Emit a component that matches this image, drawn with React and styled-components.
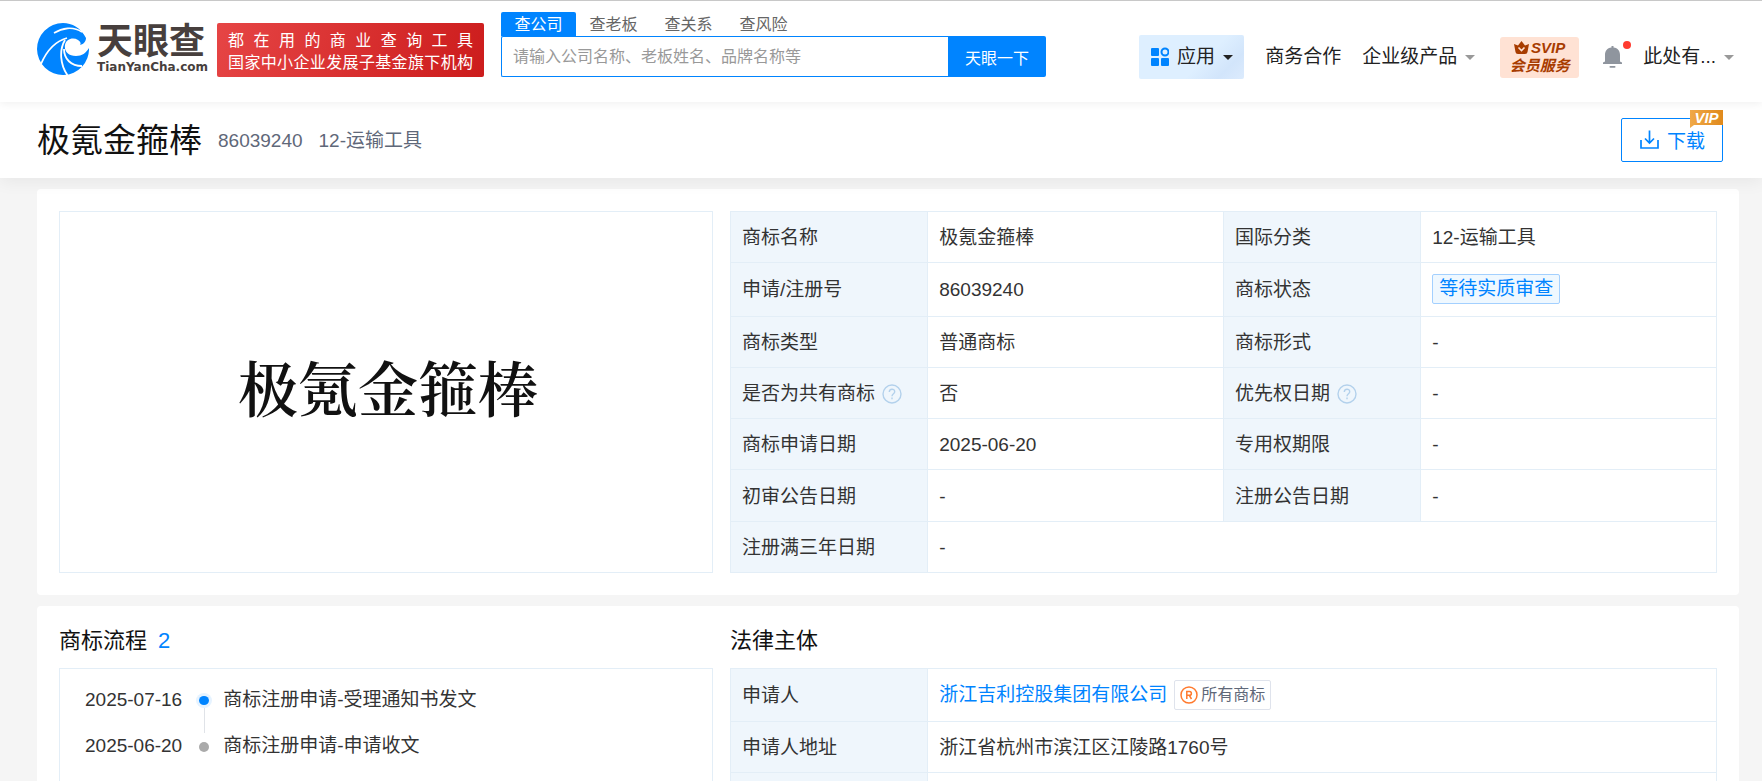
import React, { useState } from "react";
import styled, { createGlobalStyle } from "styled-components";

const GlobalStyle = createGlobalStyle`
  * {
    box-sizing: border-box;
  }

  html {
    scrollbar-width: none;
  }

  body {
    margin: 0;
    background-color: #f5f5f5;
    color: #333333;
    font-family: "Liberation Sans", "Noto Sans CJK SC", sans-serif;
    font-size: 19px;
    line-height: 26px;
  }

  button,
  input {
    font-family: inherit;
  }

  a {
    color: inherit;
    text-decoration: none;
  }
`;

const Header = styled.header`
  position: relative;
  z-index: 2;
  display: flex;
  align-items: flex-start;
  height: 102px;
  padding: 0 28px 0 37px;
  border-top: 1px solid #c8c8c8;
  background-color: #ffffff;
  box-shadow: 0 2px 8px rgba(0, 0, 0, 0.06);
`;
const Logo = styled.a`
  display: flex;
  gap: 8px;
  margin-top: 22px;
  color: #473f3d;
`;
const LogoText = styled.span`
  display: flex;
  flex-direction: column;
`;
const LogoName = styled.span`
  font-size: 36px;
  font-weight: 700;
  line-height: 38px;
`;
const LogoDomain = styled.span`
  font-family: "DejaVu Sans", sans-serif;
  font-size: 12px;
  font-weight: 700;
  line-height: 12px;
`;
const Promo = styled.div`
  width: 267px;
  height: 54px;
  margin: 22px 0 0 9px;
  padding: 7px 11px 0;
  border-radius: 2px;
  background: linear-gradient(110deg, #e64545, #cc1c1c);
  color: #ffffff;
  font-size: 16px;
  line-height: 22px;
`;
const PromoLine = styled.div`
  text-align-last: justify;
  white-space: nowrap;
`;
const Search = styled.form`
  flex: 0 1 545px;
  margin: 11px 0 0 17px;
`;
const SearchTabs = styled.div`
  display: flex;
`;
const SearchTab = styled.button`
  width: 75px;
  height: 24px;
  padding: 1px 0 0;
  border: 0;
  border-radius: 2px 2px 0 0;
  background-color: ${({ $active }) => ($active ? "#0084ff" : "transparent")};
  color: ${({ $active }) => ($active ? "#ffffff" : "#666666")};
  font-size: 16px;
  line-height: 24px;
  cursor: pointer;
`;
const SearchRow = styled.div`
  display: flex;
  height: 41px;
`;
const SearchInput = styled.input`
  flex: 1;
  min-width: 0;
  padding: 0 11px;
  border: 1px solid #0084ff;
  border-right: 0;
  border-radius: 2px 0 0 2px;
  outline: 0;
  font-size: 16px;

  &::placeholder {
    color: #999999;
  }
`;
const SearchButton = styled.button`
  width: 98px;
  padding: 0;
  border: 0;
  border-radius: 0 2px 2px 0;
  background-color: #0084ff;
  color: #ffffff;
  font-size: 16px;
  cursor: pointer;
`;
const Nav = styled.nav`
  display: flex;
  align-items: center;
  height: 44px;
  margin: 34px 0 0 auto;
  white-space: nowrap;
`;
const NavLink = styled.a`
  display: flex;
  align-items: center;
  gap: 8px;
  margin-left: 21px;
  color: #222222;
`;
const AppsLink = styled(NavLink)`
  height: 44px;
  margin-left: 0;
  padding: 0 11px 0 12px;
  border-radius: 2px;
  background: linear-gradient(135deg, #deefff 60%, #d2e5fb 82%, #dcebfd);
`;
const Caret = styled.span`
  border: 5px solid transparent;
  border-top-color: ${({ $dark }) => ($dark ? "#222222" : "#999999")};
  border-bottom: 0;
`;
const VipService = styled.a`
  display: flex;
  flex-direction: column;
  align-items: center;
  width: 79px;
  height: 41px;
  margin-left: 25px;
  padding-top: 2px;
  border-radius: 3px;
  background-color: #ffe2d4;
  color: #a83c00;
  font-size: 15px;
  font-weight: 700;
  font-style: italic;
  line-height: 18px;
`;
const VipServiceTop = styled.span`
  display: flex;
  align-items: center;
  gap: 2px;
`;
const BellButton = styled.button`
  position: relative;
  display: flex;
  margin-left: 24px;
  padding: 0;
  border: 0;
  background: none;
  cursor: pointer;
`;
const BellDot = styled.span`
  position: absolute;
  top: -5px;
  right: -9px;
  width: 8px;
  height: 8px;
  border-radius: 50%;
  background-color: #ff3b30;
`;

const TitleBar = styled.section`
  position: relative;
  z-index: 1;
  display: flex;
  align-items: center;
  height: 76px;
  padding: 0 39px 0 37px;
  background-color: #ffffff;
  box-shadow: 0 4px 16px rgba(0, 0, 0, 0.06);
`;
const TitleGroup = styled.div`
  display: flex;
  align-items: center;
  padding-top: 2px;
  color: #5f6879;
`;
const Title = styled.h1`
  margin: 0;
  color: #111111;
  font-size: 33px;
  font-weight: 400;
  line-height: 44px;
`;
const TitleMeta = styled.span`
  margin-left: 16px;
`;
const DownloadButton = styled.button`
  position: relative;
  display: flex;
  align-items: center;
  gap: 8px;
  height: 44px;
  margin-left: auto;
  padding: 0 17px 2px 18px;
  border: 1px solid #0084ff;
  border-radius: 2px;
  background-color: #ffffff;
  color: #0084ff;
  font-size: 19px;
  cursor: pointer;
`;
const VipBadge = styled.span`
  position: absolute;
  top: -9px;
  right: -1px;
  width: 33px;
  height: 18px;
  background: linear-gradient(90deg, #f0a848, #e08a1c);
  clip-path: polygon(0 0, 100% 0, 100% 15px, 4px 15px, 0 18px);
  color: #ffffff;
  font-size: 15px;
  font-weight: 700;
  font-style: italic;
  line-height: 15px;
  text-align: center;
`;

const Main = styled.main`
  display: flex;
  flex-direction: column;
  gap: 11px;
  padding: 11px 23px 24px 37px;
`;
const Card = styled.section`
  display: grid;
  grid-template-columns: 654fr 987fr;
  column-gap: 17px;
  padding: 22px;
  border-radius: 4px;
  background-color: #ffffff;
`;
const TrademarkImage = styled.div`
  display: flex;
  align-items: center;
  justify-content: center;
  padding: 0 0 12px 4px;
  border: 1px solid #e3eef7;
  color: #111111;
  font-family: "Noto Serif CJK SC", "Noto Sans CJK SC", serif;
  font-size: 60px;
  font-weight: 600;
`;
const Column = styled.div`
  display: flex;
  flex-direction: column;
`;
const Heading = styled.h2`
  display: flex;
  gap: 11px;
  margin: 0 0 14px;
  color: #111111;
  font-size: 22px;
  font-weight: 400;
  line-height: 26px;
`;
const HeadingCount = styled.span`
  color: #0084ff;
`;
const InfoTable = styled.table`
  width: 100%;
  height: ${({ $tall }) => ($tall ? "362px" : "auto")};
  border-collapse: collapse;
  table-layout: fixed;
`;
const cellPadding = "13px 11px 11px";
const LabelCell = styled.th`
  width: 20%;
  padding: ${cellPadding};
  border: 1px solid #e3eef7;
  background-color: #eff6fc;
  font-weight: 400;
  text-align: left;
`;
const ValueCell = styled.td`
  padding: ${({ $tagged }) => ($tagged ? "11px" : cellPadding)};
  border: 1px solid #e3eef7;
`;
const CellContent = styled.div`
  display: flex;
  align-items: center;
  gap: 7px;
`;
const StatusTag = styled.span`
  padding: 1px 6px;
  border: 1px solid #a3d0ff;
  border-radius: 2px;
  background-color: #eff8ff;
  color: #0084ff;
`;
const CompanyLink = styled.a`
  color: #0084ff;
`;
const AllMarksLink = styled.a`
  display: flex;
  align-items: center;
  gap: 3px;
  padding: 1px 5px;
  border: 1px solid #dfe3ec;
  border-radius: 2px;
  color: #5f6879;
  font-size: 16px;
`;
const Timeline = styled.ol`
  flex: 1;
  margin: 0;
  padding: 18px 25px 22px;
  border: 1px solid #e3eef7;
  list-style: none;
`;
const TimelineItem = styled.li`
  display: flex;
  height: 46px;
`;
const TimelineMark = styled.span`
  display: flex;
  flex-direction: column;
  align-items: center;
  width: 16px;
  margin: 0 11px 0 14px;
  padding-top: 9px;
`;
const TimelineDot = styled.span`
  width: 10px;
  height: 10px;
  border-radius: 50%;
  background-color: ${({ $active }) => ($active ? "#0084ff" : "#aaaaaa")};
  box-shadow: 0 0 0 3px ${({ $active }) => ($active ? "#e6f3ff" : "#ffffff")};
`;
const TimelineLine = styled.span`
  width: 1px;
  height: 27px;
  margin-top: 3px;
  background-color: #e0e3e8;
`;

const LogoMark = () => (
  <svg width="52" height="52" viewBox="0 0 52 52" aria-hidden="true">
    <path
      d="M49 15C44 5 35 0 26 0A26 26 0 1 0 52 25C49 30 45 33 39 33C31 33 27 28 28 22C29 16 36 14 41 17C44 19 44 21 43 22C47 21 49 18 49 15Z"
      fill="#0084ff"
    />
    <g fill="none" stroke="#ffffff">
      <path d="M17 10C25 5 36 3 45 9" strokeWidth="1.6" />
      <path d="M30 15C19 18 10 27 4 41" strokeWidth="1.8" />
      <path d="M28 17C22 27 23 42 31 53" strokeWidth="1.8" />
      <path d="M27 26C27 36 34 43 45 43" strokeWidth="1.8" />
    </g>
  </svg>
);

const AppsIcon = () => (
  <svg width="18" height="20" viewBox="0 0 18 20" fill="#0084ff" aria-hidden="true">
    <rect y="1" width="8" height="8" rx="1" />
    <rect y="11" width="8" height="8" rx="1" />
    <rect x="10" y="11" width="8" height="8" rx="1" />
    <circle cx="14" cy="5" r="3.5" fill="none" stroke="#0084ff" strokeWidth="2" />
  </svg>
);

const CrownIcon = () => (
  <svg width="15" height="13" viewBox="0 0 15 13" aria-hidden="true">
    <path d="M0 3L4 4.500L7.500 0L11 4.500L15 3L13.500 11Q13.300 13 11 13H4Q1.700 13 1.500 11Z" fill="#a83c00" />
    <path d="M4.500 6.500L7.500 9.500L10.500 6.500" fill="none" stroke="#ffe2d4" strokeWidth="1.600" />
  </svg>
);

const BellIcon = () => (
  <svg width="19" height="22" viewBox="0 0 19 22" fill="#8f959e" aria-hidden="true">
    <path d="M8.500 0H10.500V1.500C15 2 17 5 17 9V15.500L19 16.500V18H0V16.500L2 15.500V9C2 5 4 2 8.500 1.500Z" />
    <rect x="6.500" y="20" width="6" height="1.700" rx="0.800" />
  </svg>
);

const DownloadIcon = () => (
  <svg width="19" height="19" viewBox="0 0 19 19" fill="none" stroke="#0084ff" strokeWidth="1.700" aria-hidden="true">
    <path d="M1 10V18H18V10M9.500 0.500V12.500M5 8.500L9.500 13L14 8.500" />
  </svg>
);

const HelpIcon = () => (
  <svg width="20" height="20" viewBox="0 0 20 20" fill="none" stroke="#b3d1ec" strokeWidth="1.400" aria-hidden="true">
    <circle cx="10" cy="10" r="9" />
    <path d="M7.300 8C7.300 4.300 12.700 4.300 12.700 7.700C12.700 9.700 10 9.700 10 12.200M10 13.600V15.200" />
  </svg>
);

const RegisteredIcon = () => (
  <svg width="18" height="18" viewBox="0 0 18 18" fill="none" stroke="#ff7a2e" strokeWidth="1.500" aria-hidden="true">
    <circle cx="9" cy="9" r="8" />
    <path d="M6.800 13V5.500H9.500C12 5.500 12 9.300 9.500 9.300H6.800M9.300 9.300L11.500 13" />
  </svg>
);

const searchTabs = ["查公司", "查老板", "查关系", "查风险"];

const trademarkRows = [
  [{ label: "商标名称", value: "极氪金箍棒" }, { label: "国际分类", value: "12-运输工具" }],
  [{ label: "申请/注册号", value: "86039240" }, { label: "商标状态", value: "等待实质审查", tag: true }],
  [{ label: "商标类型", value: "普通商标" }, { label: "商标形式" }],
  [{ label: "是否为共有商标", value: "否", help: true }, { label: "优先权日期", help: true }],
  [{ label: "商标申请日期", value: "2025-06-20" }, { label: "专用权期限" }],
  [{ label: "初审公告日期" }, { label: "注册公告日期" }],
  [{ label: "注册满三年日期" }],
];

const processSteps = [
  { date: "2025-07-16", text: "商标注册申请-受理通知书发文" },
  { date: "2025-06-20", text: "商标注册申请-申请收文" },
];

const InfoCells = ({ item, wide }) => (
  <>
    <LabelCell scope="row">
      <CellContent>
        {item.label}
        {item.help && <HelpIcon />}
      </CellContent>
    </LabelCell>
    <ValueCell colSpan={wide ? 3 : 1} $tagged={item.tag}>
      <CellContent>{item.tag ? <StatusTag>{item.value}</StatusTag> : item.value || "-"}</CellContent>
    </ValueCell>
  </>
);

const PageHeader = () => {
  const [activeTab, setActiveTab] = useState(searchTabs[0]);

  return (
    <Header>
      <Logo href="#home">
        <LogoMark />
        <LogoText>
          <LogoName>天眼查</LogoName>
          <LogoDomain>TianYanCha.com</LogoDomain>
        </LogoText>
      </Logo>
      <Promo>
        <PromoLine>都 在 用 的 商 业 查 询 工 具</PromoLine>
        <PromoLine>国家中小企业发展子基金旗下机构</PromoLine>
      </Promo>
      <Search onSubmit={(event) => event.preventDefault()}>
        <SearchTabs>
          {searchTabs.map((tab) => (
            <SearchTab key={tab} type="button" $active={tab === activeTab} onClick={() => setActiveTab(tab)}>
              {tab}
            </SearchTab>
          ))}
        </SearchTabs>
        <SearchRow>
          <SearchInput aria-label="搜索" placeholder="请输入公司名称、老板姓名、品牌名称等" />
          <SearchButton type="submit">天眼一下</SearchButton>
        </SearchRow>
      </Search>
      <Nav>
        <AppsLink href="#apps">
          <AppsIcon />
          应用
          <Caret $dark />
        </AppsLink>
        <NavLink href="#business">商务合作</NavLink>
        <NavLink href="#products">
          企业级产品
          <Caret />
        </NavLink>
        <VipService href="#vip">
          <VipServiceTop>
            <CrownIcon />
            SVIP
          </VipServiceTop>
          会员服务
        </VipService>
        <BellButton type="button" aria-label="消息">
          <BellIcon />
          <BellDot />
        </BellButton>
        <NavLink href="#user">
          此处有...
          <Caret />
        </NavLink>
      </Nav>
    </Header>
  );
};

const App = () => (
  <>
    <GlobalStyle />
    <PageHeader />
    <TitleBar>
      <TitleGroup>
        <Title>极氪金箍棒</Title>
        <TitleMeta>86039240</TitleMeta>
        <TitleMeta>12-运输工具</TitleMeta>
      </TitleGroup>
      <DownloadButton type="button">
        <DownloadIcon />
        下载
        <VipBadge>VIP</VipBadge>
      </DownloadButton>
    </TitleBar>
    <Main>
      <Card>
        <TrademarkImage>极氪金箍棒</TrademarkImage>
        <InfoTable $tall>
          <tbody>
            {trademarkRows.map((row) => (
              <tr key={row[0].label}>
                {row.map((item) => (
                  <InfoCells key={item.label} item={item} wide={row.length === 1} />
                ))}
              </tr>
            ))}
          </tbody>
        </InfoTable>
      </Card>
      <Card>
        <Column>
          <Heading>
            商标流程 <HeadingCount>{processSteps.length}</HeadingCount>
          </Heading>
          <Timeline>
            {processSteps.map((step, index) => (
              <TimelineItem key={step.date}>
                <span>{step.date}</span>
                <TimelineMark>
                  <TimelineDot $active={index === 0} />
                  {index < processSteps.length - 1 && <TimelineLine />}
                </TimelineMark>
                <span>{step.text}</span>
              </TimelineItem>
            ))}
          </Timeline>
        </Column>
        <Column>
          <Heading>法律主体</Heading>
          <InfoTable>
            <tbody>
              <tr>
                <LabelCell scope="row">申请人</LabelCell>
                <ValueCell $tagged>
                  <CellContent>
                    <CompanyLink href="#company">浙江吉利控股集团有限公司</CompanyLink>
                    <AllMarksLink href="#trademarks">
                      <RegisteredIcon />
                      所有商标
                    </AllMarksLink>
                  </CellContent>
                </ValueCell>
              </tr>
              <tr>
                <LabelCell scope="row">申请人地址</LabelCell>
                <ValueCell>浙江省杭州市滨江区江陵路1760号</ValueCell>
              </tr>
              <tr>
                <LabelCell scope="row" />
                <ValueCell />
              </tr>
            </tbody>
          </InfoTable>
        </Column>
      </Card>
    </Main>
  </>
);

export default App;
